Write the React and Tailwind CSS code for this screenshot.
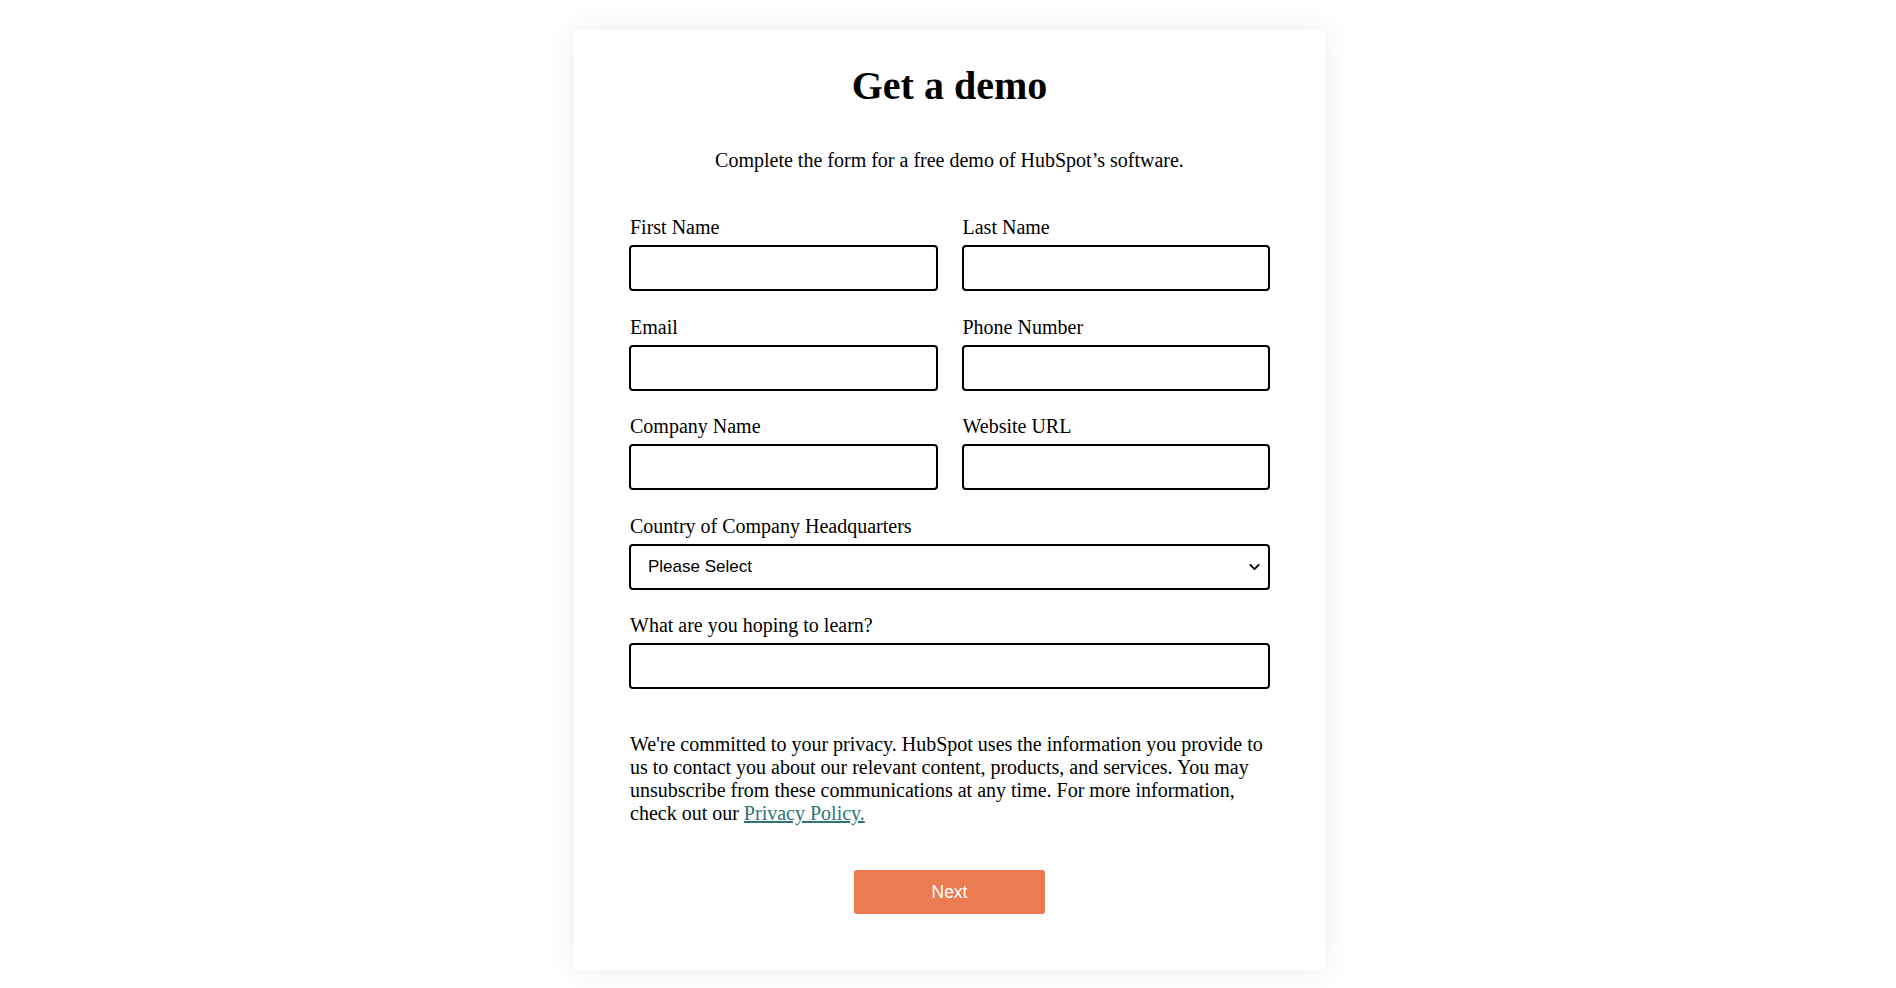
import { ChevronDown } from 'lucide-react';

const serif = { fontFamily: '"Liberation Serif", "Times New Roman", serif' };

const Field = ({ label, className = '' }) => (
  <div className={`flex flex-col ${className}`}>
    <label className="pl-[1px] text-[20px] leading-[23px] text-black">{label}</label>
    <input
      type="text"
      className="mt-[6px] h-[46px] w-full rounded-[4px] border-2 border-black bg-white px-3 outline-none"
    />
  </div>
);

export default function App() {
  return (
    <div className="min-h-[988px] w-full bg-white pt-[30px] pl-[3px]" style={serif}>
      <div className="mx-auto w-[751px] bg-white px-[55px] pt-[33px] pb-[56px] shadow-[0_0_26px_rgba(30,40,60,0.09)]">
        <h1 className="text-center text-[40px] font-bold leading-[46px] text-black">Get a demo</h1>
        <p className="mt-[40px] text-center text-[20px] leading-[23px] text-black">
          Complete the form for a free demo of HubSpot’s software.
        </p>

        <form className="mt-[44px]" onSubmit={(e) => e.preventDefault()}>
          <div className="grid grid-cols-2 gap-x-[24px] gap-y-[24.5px]">
            <Field label="First Name" />
            <Field label="Last Name" />
            <Field label="Email" />
            <Field label="Phone Number" />
            <Field label="Company Name" />
            <Field label="Website URL" />
          </div>

          <div className="mt-[24.5px] flex flex-col">
            <label className="pl-[1px] text-[20px] leading-[23px] text-black">Country of Company Headquarters</label>
            <div className="relative mt-[6px]">
              <select
                defaultValue=""
                className="h-[46px] w-full appearance-none rounded-[4px] border-2 border-black bg-white pl-[17px] text-[17px] text-black outline-none"
                style={{ fontFamily: '"Liberation Sans", Arial, sans-serif' }}
              >
                <option value="">Please Select</option>
              </select>
              <ChevronDown size={17} strokeWidth={2.6} className="pointer-events-none absolute right-[7px] top-1/2 -translate-y-1/2 text-black" />
            </div>
          </div>

          <Field label="What are you hoping to learn?" className="mt-[24.5px]" />

          <p className="mt-[44px] pl-[1px] text-[20px] leading-[23px] text-black">
            We're committed to your privacy. HubSpot uses the information you provide to us to contact you about our
            relevant content, products, and services. You may unsubscribe from these communications at any time. For
            more information, check out our{' '}
            <a href="#" className="text-[#2f7377] underline">Privacy Policy.</a>
          </p>

          <div className="mt-[45px] flex justify-center">
            <button
              type="submit"
              className="h-[44px] w-[191px] rounded-[3px] bg-[#eb7b50] text-[17.5px] text-white"
              style={{ fontFamily: '"Liberation Sans", Arial, sans-serif' }}
            >
              Next
            </button>
          </div>
        </form>
      </div>
    </div>
  );
}
